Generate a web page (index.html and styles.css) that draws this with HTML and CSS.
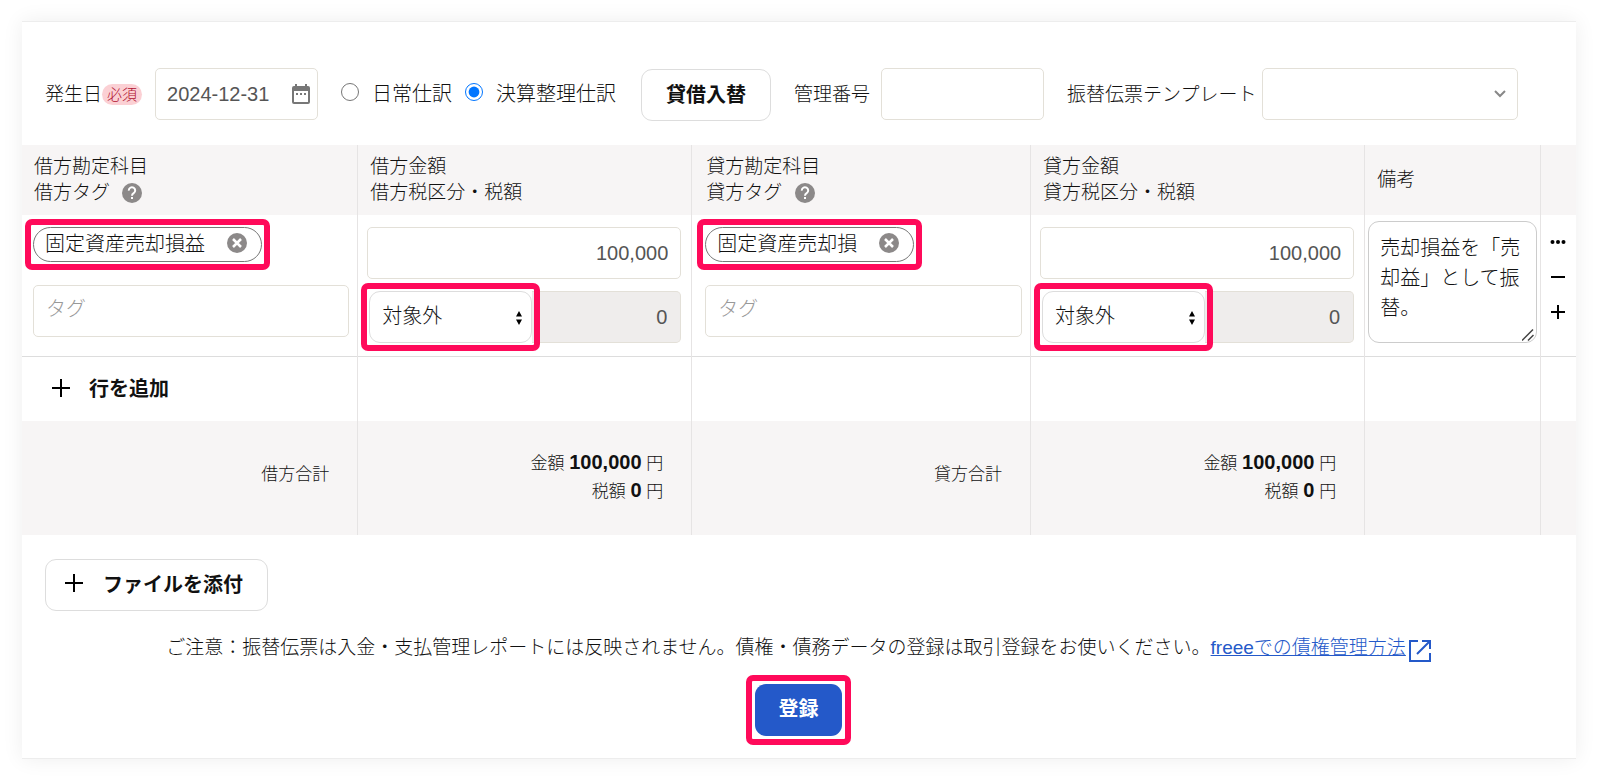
FILE: index.html
```html
<!DOCTYPE html>
<html lang="ja">
<head>
<meta charset="utf-8">
<meta name="viewport" content="width=device-width, initial-scale=1">
<title>振替伝票</title>
<link rel="stylesheet" href="styles.css">
</head>
<body>
<main class="panel">
  <div class="toolbar">
    <div class="field field-date">
      <label for="date">発生日</label><span class="badge">必須</span>
      <div class="date-box">
        <input class="input" id="date" type="text" value="2024-12-31">
        <svg class="calendar" viewBox="0 0 18 20" aria-hidden="true"><path fill="#777" fill-rule="evenodd" d="M2 2h1V0h2v2h8V0h2v2h1a2 2 0 0 1 2 2v14a2 2 0 0 1-2 2H2a2 2 0 0 1-2-2V4a2 2 0 0 1 2-2zm0 5v11h14V7zM4 9h2v2H4zm4 0h2v2H8zm4 0h2v2h-2z"/></svg>
      </div>
    </div>
    <div class="radios">
      <input type="radio" name="kind" id="daily"><label for="daily">日常仕訳</label>
      <input type="radio" name="kind" id="closing" checked><label for="closing">決算整理仕訳</label>
    </div>
    <button class="btn btn-swap" type="button">貸借入替</button>
    <div class="field field-number">
      <label for="number">管理番号</label>
      <input class="input" id="number" type="text">
    </div>
    <div class="field field-template">
      <label for="template">振替伝票テンプレート</label>
      <div class="template-box">
        <select class="input" id="template"><option></option></select>
        <svg class="chevron" viewBox="0 0 12 8" aria-hidden="true"><path d="M1 1l5 5 5-5" fill="none" stroke="#888" stroke-width="2"/></svg>
      </div>
    </div>
  </div>

  <table class="journal">
    <colgroup><col class="c1"><col class="c2"><col class="c3"><col class="c4"><col class="c5"><col></colgroup>
    <thead>
      <tr>
        <th>借方勘定科目<br>借方タグ <svg class="help" viewBox="0 0 20 20" aria-hidden="true"><circle cx="10" cy="10" r="10" fill="#8c8989"/><path d="M6.800 7.600a3.200 3.200 0 1 1 4.900 2.600c-1.200.8-1.700 1.300-1.700 2.500" fill="none" stroke="#fff" stroke-width="2"/><rect x="9" y="14" width="2" height="2" fill="#fff"/></svg></th>
        <th>借方金額<br>借方税区分・税額</th>
        <th class="credit">貸方勘定科目<br>貸方タグ <svg class="help" viewBox="0 0 20 20" aria-hidden="true"><circle cx="10" cy="10" r="10" fill="#8c8989"/><path d="M6.800 7.600a3.200 3.200 0 1 1 4.900 2.600c-1.200.8-1.700 1.300-1.700 2.500" fill="none" stroke="#fff" stroke-width="2"/><rect x="9" y="14" width="2" height="2" fill="#fff"/></svg></th>
        <th>貸方金額<br>貸方税区分・税額</th>
        <th>備考</th>
        <th></th>
      </tr>
    </thead>
    <tbody>
      <tr class="entry">
        <td class="account">
          <div class="chip marked">固定資産売却損益
            <button class="chip-remove" type="button" aria-label="削除"><svg viewBox="0 0 20 20"><circle cx="10" cy="10" r="10" fill="#8c8989"/><path d="M6 6l8 8M14 6l-8 8" stroke="#fff" stroke-width="2.500"/></svg></button>
          </div>
          <input class="input tag" type="text" placeholder="タグ" aria-label="借方タグ">
        </td>
        <td class="amount">
          <input class="input number" type="text" value="100,000" aria-label="借方金額">
          <div class="tax">
            <div class="tax-kind marked">
              <select aria-label="借方税区分"><option>対象外</option></select>
              <svg class="sorter" viewBox="0 0 6 14" aria-hidden="true"><path d="M0 5.500L3 0l3 5.500zM0 8.500L3 14l3-5.500z"/></svg>
            </div>
            <input class="tax-value" type="text" value="0" disabled aria-label="借方税額">
          </div>
        </td>
        <td class="account credit">
          <div class="chip marked">固定資産売却損
            <button class="chip-remove" type="button" aria-label="削除"><svg viewBox="0 0 20 20"><circle cx="10" cy="10" r="10" fill="#8c8989"/><path d="M6 6l8 8M14 6l-8 8" stroke="#fff" stroke-width="2.500"/></svg></button>
          </div>
          <input class="input tag" type="text" placeholder="タグ" aria-label="貸方タグ">
        </td>
        <td class="amount">
          <input class="input number" type="text" value="100,000" aria-label="貸方金額">
          <div class="tax">
            <div class="tax-kind marked">
              <select aria-label="貸方税区分"><option>対象外</option></select>
              <svg class="sorter" viewBox="0 0 6 14" aria-hidden="true"><path d="M0 5.500L3 0l3 5.500zM0 8.500L3 14l3-5.500z"/></svg>
            </div>
            <input class="tax-value" type="text" value="0" disabled aria-label="貸方税額">
          </div>
        </td>
        <td class="memo">
          <div class="memo-box">
            <textarea aria-label="備考">売却損益を「売却益」として振替。</textarea>
            <svg class="grip" viewBox="0 0 12 12" aria-hidden="true"><path d="M0 11.500L11 .5M6 11.500l5.500-5.500" stroke="#444" stroke-width="1.500"/></svg>
          </div>
        </td>
        <td class="actions">
          <div class="action-list">
            <button type="button" aria-label="メニュー"><svg viewBox="0 0 16 16"><circle cx="2.500" cy="8" r="2"/><circle cx="8" cy="8" r="2"/><circle cx="13.500" cy="8" r="2"/></svg></button>
            <button type="button" aria-label="行を削除"><svg viewBox="0 0 16 16"><path d="M1 7h14v2H1z"/></svg></button>
            <button type="button" aria-label="行を挿入"><svg viewBox="0 0 16 16"><path d="M7 1h2v6h6v2H9v6H7V9H1V7h6z"/></svg></button>
          </div>
        </td>
      </tr>
      <tr class="add">
        <td><button class="add-row" type="button"><svg class="plus" viewBox="0 0 18 18" aria-hidden="true"><path d="M8 0h2v8h8v2h-8v8H8v-8H0V8h8z"/></svg>行を追加</button></td>
        <td></td><td></td><td></td><td></td><td></td>
      </tr>
    </tbody>
    <tfoot>
      <tr>
        <td class="total">借方合計</td>
        <td>金額 <b>100,000</b> 円<br>税額 <b>0</b> 円</td>
        <td class="total">貸方合計</td>
        <td>金額 <b>100,000</b> 円<br>税額 <b>0</b> 円</td>
        <td></td>
        <td></td>
      </tr>
    </tfoot>
  </table>

  <div class="footer">
    <button class="btn btn-file" type="button"><svg class="plus" viewBox="0 0 18 18" aria-hidden="true"><path d="M8 0h2v8h8v2h-8v8H8v-8H0V8h8z"/></svg>ファイルを添付</button>
    <p class="note">ご注意：振替伝票は入金・支払管理レポートには反映されません。債権・債務データの登録は取引登録をお使いください。<a href="#">freeeでの債権管理方法</a><svg class="external" viewBox="0 0 22 22" aria-hidden="true"><path d="M9 1H1v20h20v-8M13 1h8v8M21 1L8 14" fill="none" stroke="#2459c9" stroke-width="2"/></svg></p>
    <div class="submit marked"><button class="btn-submit" type="submit">登録</button></div>
  </div>
</main>
</body>
</html>
```

FILE: styles.css
```css
* {
  box-sizing: border-box;
}

body {
  margin: 0;
  padding: 21px 24px 19px 22px;
  background: #fff;
  color: #111;
  font-family: "Liberation Sans", "Noto Sans CJK JP", sans-serif;
  font-size: 19px;
  font-weight: 300;
}

button,
input,
select,
textarea {
  margin: 0;
  color: inherit;
  font-family: inherit;
  font-size: 20px;
  font-weight: 300;
}

button {
  cursor: pointer;
}

svg {
  display: block;
  flex: none;
}

.panel {
  border-top: 1px solid #ededed;
  border-bottom: 1px solid #ededed;
  background: #fff;
  box-shadow: 0 0 20px rgba(0, 0, 0, 0.07);
}

.input {
  width: 100%;
  height: 52px;
  padding: 0 12px;
  border: 1px solid #e3e0d8;
  border-radius: 5px;
  background: #fff;
}

.btn {
  display: flex;
  align-items: center;
  height: 52px;
  border: 1px solid #ddd;
  border-radius: 11px;
  background: #fff;
  font-weight: 700;
}

/* Pink frame drawn around the controls to be filled in */
.marked {
  --gap: 9px;
  position: relative;
}

.marked::after {
  content: "";
  position: absolute;
  inset: calc(var(--gap) * -1);
  border: 6px solid #ff0a5a;
  border-radius: 7px;
  pointer-events: none;
}

/* Toolbar */
.toolbar {
  display: flex;
  flex-wrap: wrap;
  align-items: center;
  padding: 45px 24px 24px 23px;
}

.toolbar label {
  padding-bottom: 3px;
}

.field {
  display: flex;
  align-items: center;
}

.badge {
  padding: 0 5px;
  border-radius: 11px;
  background: #fbd0d4;
  color: #b01030;
  font-size: 15px;
  line-height: 21px;
}

.date-box {
  position: relative;
  width: 163px;
  margin-left: 13px;
}

.date-box .input {
  padding-left: 11px;
}

.date-box .input,
.number {
  color: #555;
}

.calendar {
  position: absolute;
  top: 16px;
  right: 8px;
  width: 18px;
  height: 20px;
}

.radios {
  display: flex;
  align-items: center;
  margin-left: 23px;
  font-size: 20px;
}

.radios input {
  width: 18px;
  height: 18px;
  margin: 0 13px 4px 0;
  accent-color: #0075ff;
}

.radios label {
  margin-right: 13px;
}

.btn-swap {
  margin: 2px 0 0 12px;
  padding: 0 24px 4px;
}

.field-number {
  gap: 11px;
  margin-left: 23px;
}

.field-number .input {
  width: 163px;
}

.field-template {
  gap: 6px;
  margin-left: 23px;
}

.template-box {
  position: relative;
  width: 256px;
}

select {
  appearance: none;
}

.chevron {
  position: absolute;
  top: 22px;
  right: 12px;
  width: 12px;
  height: 8px;
  pointer-events: none;
}

/* Journal table */
.journal {
  width: 100%;
  table-layout: fixed;
  border-collapse: collapse;
}

.c1 {
  width: 21.6%;
}

.c2,
.c4 {
  width: 21.5%;
}

.c3 {
  width: 21.8%;
}

.c5 {
  width: 11.3%;
}

.journal th,
.journal td {
  padding: 0;
  border-left: 1px solid #e6e4e4;
}

.journal th:first-child,
.journal td:first-child {
  border-left: 0;
}

.journal th {
  height: 70px;
  padding: 0 12px;
  background: #f7f5f5;
  font-weight: 300;
  line-height: 26px;
  text-align: left;
}

.journal th.credit {
  padding-left: 14px;
}

.help {
  display: inline-block;
  width: 20px;
  height: 20px;
  margin-left: 7px;
  vertical-align: -4px;
}

.entry {
  height: 141px;
}

.journal .entry td {
  vertical-align: top;
}

.journal .account {
  padding: 12px 8px 18px 11px;
}

.journal .account.credit {
  padding-left: 13px;
}

.chip {
  display: inline-flex;
  align-items: center;
  gap: 22px;
  height: 35px;
  padding: 0 14px 4px 11px;
  border: 1px solid #777;
  border-radius: 18px;
  font-size: 20px;
  white-space: nowrap;
}

.chip-remove {
  width: 20px;
  height: 20px;
  padding: 0;
  border: 0;
  background: none;
}

.tag {
  display: block;
  margin-top: 23px;
  padding-bottom: 3px;
}

.tag::placeholder {
  color: #999;
  opacity: 1;
}

.journal .amount {
  padding: 12px 10px 12px 9px;
}

.number {
  display: block;
  text-align: right;
}

.tax {
  display: flex;
  margin-top: 12px;
  padding-left: 2px;
}

.tax-kind {
  --gap: 8px;
  flex: none;
  width: 163px;
}

.tax-kind select {
  display: block;
  width: 100%;
  height: 52px;
  padding: 0 12px 2px;
  border: 1px solid #ddd;
  border-radius: 11px;
  background: #fff;
}

.sorter {
  position: absolute;
  top: 20px;
  right: 10px;
  width: 6px;
  height: 14px;
  pointer-events: none;
}

.tax-value {
  flex: 1;
  min-width: 0;
  height: 52px;
  padding: 0 13px;
  border: 1px solid #e3e0d8;
  border-left: 0;
  border-radius: 0 5px 5px 0;
  background: #efedec;
  color: #555;
  text-align: right;
}

.journal .memo {
  padding: 6px 3px;
}

.memo-box {
  position: relative;
}

.memo textarea {
  display: block;
  width: 100%;
  height: 122px;
  padding: 11px;
  border: 1px solid #ccc;
  border-radius: 11px;
  line-height: 30px;
  resize: none;
  overflow: hidden;
}

.grip {
  position: absolute;
  right: 3px;
  bottom: 2px;
  width: 12px;
  height: 12px;
  pointer-events: none;
}

.action-list {
  display: flex;
  flex-direction: column;
  align-items: center;
  gap: 19px;
  padding-top: 19px;
}

.action-list button {
  width: 16px;
  height: 16px;
  padding: 0;
  border: 0;
  background: none;
}

.add {
  height: 65px;
}

.journal .add td {
  border-top: 1px solid #ddd;
}

.add-row {
  display: flex;
  align-items: center;
  gap: 19px;
  padding: 0 30px 2px;
  border: 0;
  background: none;
  font-weight: 700;
}

.plus {
  width: 18px;
  height: 18px;
}

.journal tfoot td {
  height: 114px;
  padding: 0 28px;
  background: #f7f5f5;
  font-size: 17px;
  line-height: 28px;
  text-align: right;
}

.journal tfoot .total {
  padding-bottom: 6px;
}

.journal tfoot b {
  font-size: 20px;
  font-weight: 700;
  line-height: 20px;
}

/* Footer */
.footer {
  padding: 24px 24px 22px 23px;
}

.btn-file {
  gap: 20px;
  padding: 0 24px 4px 19px;
}

.note {
  display: flex;
  flex-wrap: wrap;
  align-items: center;
  justify-content: center;
  margin: 22px 0 21px;
  line-height: 30px;
}

.note a {
  color: #2459c9;
}

.external {
  width: 22px;
  height: 22px;
  margin: 6px 0 0 3px;
}

.submit {
  width: 87px;
  margin: 0 auto;
}

.btn-submit {
  display: block;
  width: 100%;
  height: 52px;
  padding: 0 0 5px;
  border: 0;
  border-radius: 11px;
  background: #2459c9;
  color: #fff;
  font-weight: 700;
}
```
